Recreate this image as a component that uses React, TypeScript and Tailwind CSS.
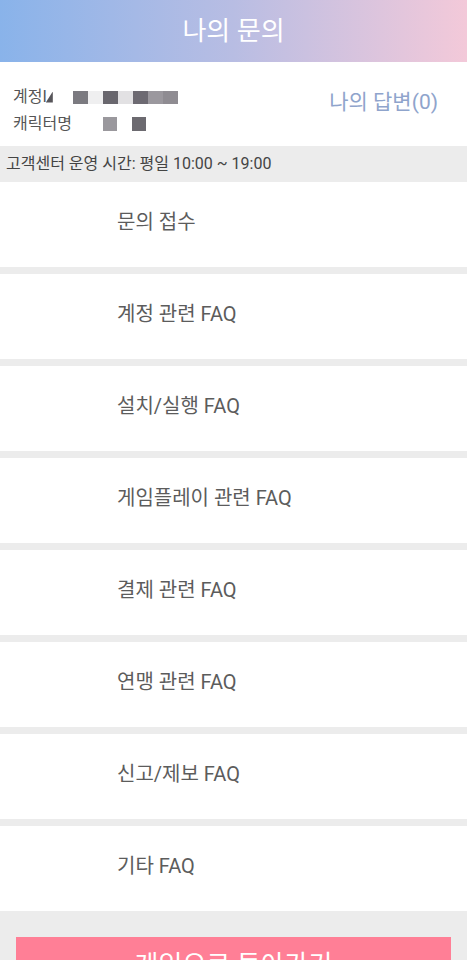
const items = [
  '문의 접수',
  '계정 관련 FAQ',
  '설치/실행 FAQ',
  '게임플레이 관련 FAQ',
  '결제 관련 FAQ',
  '연맹 관련 FAQ',
  '신고/제보 FAQ',
  '기타 FAQ',
];

// censored mosaic cells next to the account id
const idCells = ['#7b7a80', '#efeff0', '#69676e', '#e2e1e3', '#6d6a72', '#9b989e', '#8f8c92'];

export default function App() {
  return (
    <div className="flex min-h-screen flex-col bg-[#ececec] font-['Roboto','Noto_Sans_CJK_KR',sans-serif]">
      <header className="flex h-[62px] items-center justify-center bg-gradient-to-r from-[#89b3ea] via-[#b8bde3] to-[#f3c9d9]">
        <h1 className="text-[26px] text-white">나의 문의</h1>
      </header>

      <section className="flex h-[84px] items-start justify-between bg-white pl-[13px] pr-[29px] pt-[24px]">
        <div className="flex flex-col gap-[5px] text-[16px] leading-[22px] text-[#555]">
          <div className="flex items-center">
            <span>계정I</span>
            <span className="ml-[-1px] h-[11px] w-[7px] bg-[#57555a] [clip-path:polygon(100%_0,100%_100%,0_100%)]" />
            <div className="ml-[20px] flex">
              {idCells.map((c, i) => (
                <span key={i} className="h-[13px] w-[15px]" style={{ background: c }} />
              ))}
            </div>
          </div>
          <div className="flex items-center">
            <span>캐릭터명</span>
            <span className="ml-[31px] h-[14px] w-[14px] bg-[#9a989d]" />
            <span className="ml-[15px] h-[14px] w-[14px] bg-[#6c6a70]" />
          </div>
        </div>
        <button type="button" className="pt-[1px] text-[21px] text-[#8fa4cc]">
          나의 답변(0)
        </button>
      </section>

      <div className="flex h-[36px] items-center px-[6px] text-[16px] text-[#444]">
        고객센터 운영 시간: 평일 10:00 ~ 19:00
      </div>

      <nav className="flex flex-col gap-[7px]">
        {items.map((label) => (
          <button
            key={label}
            type="button"
            className="flex h-[85px] items-center bg-white pb-[6px] pl-[117px] text-left text-[20px] text-[#5c5c5c]"
          >
            {label}
          </button>
        ))}
      </nav>

      <div className="px-[16px] pt-[26px] pb-[16px]">
        <button
          type="button"
          className="flex h-[56px] w-full items-center justify-center bg-[#ff7f96] text-[26px] text-white"
        >
          게임으로 돌아가기
        </button>
      </div>
    </div>
  );
}
